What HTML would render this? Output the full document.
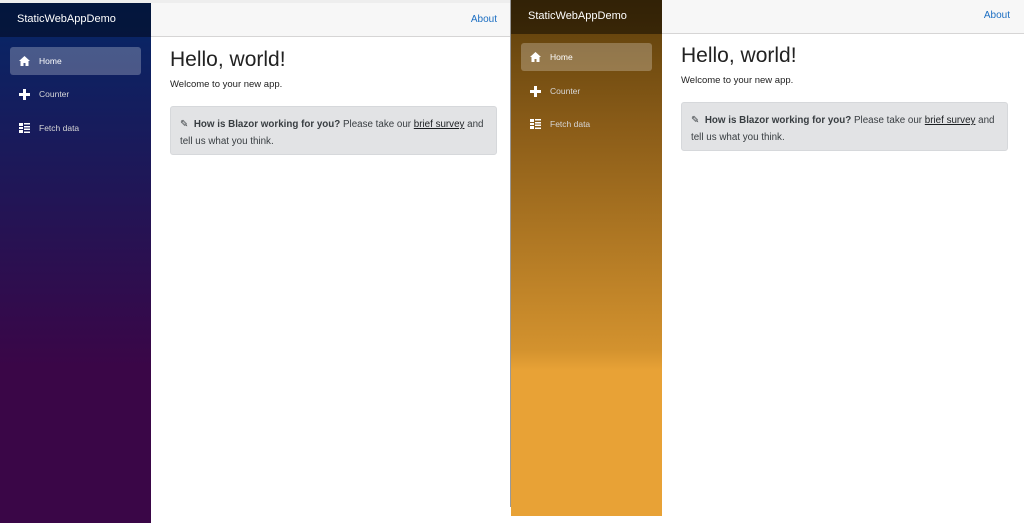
<!DOCTYPE html><html><head><style>
*{margin:0;padding:0;box-sizing:border-box}
body{width:1024px;height:507px;overflow:hidden;background:#fff;font-family:"Liberation Sans",sans-serif;position:relative}
.p{position:absolute;height:520px;width:513px}
.sb{position:absolute;left:0;top:0;width:151px;height:100%}
.brand{height:34px;color:#fff;font-size:11px;padding:10px 0 0 17px}
.top{position:absolute;left:151px;top:0;right:0;height:34px;background:#f7f7f7;border-bottom:1px solid #d6d5d5}
.top a{position:absolute;right:14px;top:11px;color:#1b6ec2;font-size:10px}
.nav{position:absolute;left:10px;width:131px;height:28px;border-radius:3px;color:#d7d7d7;font-size:8.5px;padding:9px 0 0 29px}
.nav.a{background:rgba(255,255,255,.25);color:#fff}
.nav svg{position:absolute;left:9px;top:9px}
h1{position:absolute;font-weight:normal;font-size:21px;color:#222}
.w{position:absolute;font-size:9.5px;color:#222}
.al{position:absolute;width:327px;height:49px;background:#e2e3e5;border-radius:3px;border:1px solid #d6d8db;font-size:9.8px;color:#383d41;padding:9px 9px 0 9px;line-height:17px}
.al u{color:#1b1e21}
</style></head><body>
<div style="position:absolute;left:0;top:0;width:511px;height:3px;background:#eee"></div>
<div class="p" style="left:0;top:3px;width:511px">
 <div class="sb" style="background:linear-gradient(180deg,#052767 0%,#3a0647 70%)">
  <div class="brand" style="background:rgba(0,0,0,.4)">StaticWebAppDemo</div>
 </div>
 <div class="top"><a>About</a></div>
</div>
<div style="position:absolute;left:510px;top:0;width:2px;height:507px;background:#999"></div>
<div class="p" style="left:511px;top:-4px">
 <div class="sb" style="background:linear-gradient(180deg,#5a3d0a 0%,#8a5c18 25%,#d3922e 68%,#e8a236 72%,#e8a236 100%)">
  <div class="brand" style="background:rgba(0,0,0,.45);height:38px;padding-top:14px">StaticWebAppDemo</div>
 </div>
 <div class="top" style="height:38px"><a style="top:14px">About</a></div>
</div>
<div class="nav a" style="left:10px;top:47px"><svg width="11" height="10" viewBox="0 0 11 10"><path d="M5.5 0L0 5h1.5v5h3V7h2v3h3V5H11z" fill="#fff"/></svg>Home</div>
<div class="nav" style="left:10px;top:80px"><svg width="11" height="11" viewBox="0 0 11 11"><path d="M4 0h3v4h4v3H7v4H4V7H0V4h4z" fill="#fff"/></svg>Counter</div>
<div class="nav" style="left:10px;top:114px"><svg width="11" height="10" viewBox="0 0 11 10"><path d="M0 0h4v3H0zM0 4h4v2H0zM0 7h4v3H0zM5 0h6v1.5H5zM5 3h6v1.5H5zM5 5.5h6V7H5zM5 8.5h6V10H5z" fill="#fff"/></svg>Fetch data</div>
<div class="nav a" style="left:521px;top:43px"><svg width="11" height="10" viewBox="0 0 11 10"><path d="M5.5 0L0 5h1.5v5h3V7h2v3h3V5H11z" fill="#fff"/></svg>Home</div>
<div class="nav" style="left:521px;top:77px"><svg width="11" height="11" viewBox="0 0 11 11"><path d="M4 0h3v4h4v3H7v4H4V7H0V4h4z" fill="#fff"/></svg>Counter</div>
<div class="nav" style="left:521px;top:110px"><svg width="11" height="10" viewBox="0 0 11 10"><path d="M0 0h4v3H0zM0 4h4v2H0zM0 7h4v3H0zM5 0h6v1.5H5zM5 3h6v1.5H5zM5 5.5h6V7H5zM5 8.5h6V10H5z" fill="#fff"/></svg>Fetch data</div>

<h1 style="left:170px;top:48px">Hello, world!</h1>
<div class="w" style="left:170px;top:79px">Welcome to your new app.</div>
<div class="al" style="left:170px;top:106px"><span style="font-size:10px">✎</span>&nbsp; <b>How is Blazor working for you?</b> Please take our <u>brief survey</u> and tell us what you think.</div>

<h1 style="left:681px;top:44px">Hello, world!</h1>
<div class="w" style="left:681px;top:75px">Welcome to your new app.</div>
<div class="al" style="left:681px;top:102px"><span style="font-size:10px">✎</span>&nbsp; <b>How is Blazor working for you?</b> Please take our <u>brief survey</u> and tell us what you think.</div>
</body></html>
